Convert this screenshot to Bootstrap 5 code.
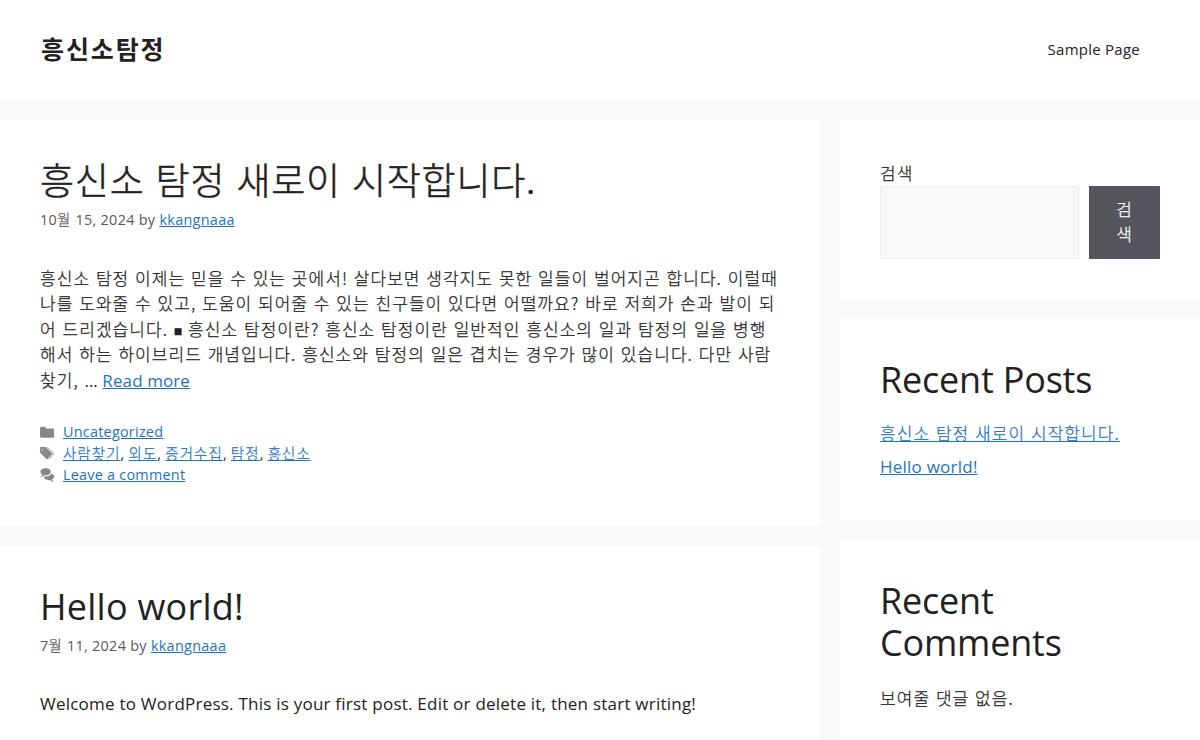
<!DOCTYPE html>
<html lang="ko">

<head>
  <meta charset="UTF-8" />
  <meta name="viewport" content="width=device-width, initial-scale=1.0" />
  <title>흥신소탐정</title>
  <link href="https://cdn.jsdelivr.net/npm/bootstrap@5.3.3/dist/css/bootstrap.min.css" rel="stylesheet" />
  <style>
    body {
      background-color: #f6f8fa;
      color: #222;
      font-family: "Open Sans", "Noto Sans CJK KR", sans-serif;
      font-size: 17px;
      line-height: 25.5px;
      letter-spacing: .23px;
      height: 740px;
      overflow: hidden;
    }
    a { color: #1e73be; }
    .ko {
      font-family: "Noto Sans CJK KR", sans-serif;
      font-weight: 300;
      letter-spacing: 1.05px;
      -webkit-text-stroke: .25px currentColor;
    }
    .latin {
      font-family: "Open Sans", sans-serif;
      font-weight: 400;
      letter-spacing: .1px;
      -webkit-text-stroke: 0;
    }
    .bullet { font-family: "DejaVu Sans", sans-serif; font-size: 14px; line-height: 1; letter-spacing: 0; }
    .site-header { height: 100px; padding: 0 60px 2px 41px; }
    .site-title {
      font-size: 25px;
      font-weight: 700;
      letter-spacing: 1.9px;
      color: #222;
      -webkit-text-stroke: 0;
    }
    .main-nav { font-size: 15px; color: #222; letter-spacing: .25px; }
    .page-grid { gap: 20px; margin-top: 20px; }
    .side-col { width: 360px; gap: 20px; }
    .posts-col { gap: 20px; min-width: 0; }
    .panel { background: #fff; padding: 40px; }
    .heading {
      font-size: 36px;
      line-height: 42px;
      font-weight: 400;
      letter-spacing: .25px;
      margin: 0;
    }
    .side-col .heading { letter-spacing: -.2px; }
    .heading.ko {
      font-size: 37px;
      font-weight: 300;
      line-height: 38px;
      letter-spacing: .78px;
      padding-bottom: 4px;
      -webkit-text-stroke: .5px currentColor;
    }
    .byline {
      font-size: 14.45px;
      line-height: 21.7px;
      height: 21.7px;
      letter-spacing: .28px;
      color: #595959;
      margin: 7px 0 34px;
    }
    .byline .ko { line-height: 1; }
    .excerpt { height: 127.5px; margin-bottom: 0; }
    .post-meta { font-size: 14.45px; line-height: 21.7px; margin-top: 28.9px; }
    .post-meta > div { height: 21.7px; }
    .post-meta .ko { letter-spacing: 1.12px; }
    .post-meta svg {
      width: 14.45px;
      height: 14.45px;
      fill: #87868d;
      margin-right: 8.5px;
    }
    .search-input {
      height: 73px;
      border: 1px solid #ebeced;
      background: #f7f8f9;
      border-radius: 0;
    }
    .search-btn {
      width: 71px;
      height: 73px;
      padding: 9px 24px 11px;
      border: 0;
      background: #55555e;
      color: #fff;
      word-break: break-all;
    }
    .recent-list { margin: 19px 0 0; }
    .recent-list li { height: 25.5px; margin-bottom: 9px; }
    .recent-list li:last-child { margin-bottom: 0; }
    .no-comments { margin-top: 21px; }
  </style>
</head>

<body>
  <header class="site-header bg-white d-flex align-items-center justify-content-between">
    <a href="#" class="site-title ko text-decoration-none">흥신소탐정</a>
    <nav><a href="#" class="main-nav text-decoration-none">Sample Page</a></nav>
  </header>

  <div class="page-grid d-flex align-items-start">
    <main class="posts-col flex-grow-1 d-flex flex-column">
      <article class="panel">
        <h2 class="heading ko">흥신소 탐정 새로이 시작합니다.</h2>
        <div class="byline">10<span class="ko">월</span> 15, 2024 by <a href="#">kkangnaaa</a></div>
        <p class="excerpt text-nowrap ko">
          흥신소 탐정 이제는 믿을 수 있는 곳에서! 살다보면 생각지도 못한 일들이 벌어지곤 합니다. 이럴때<br>
          나를 도와줄 수 있고, 도움이 되어줄 수 있는 친구들이 있다면 어떨까요? 바로 저희가 손과 발이 되<br>
          어 드리겠습니다. <span class="bullet">■</span> 흥신소 탐정이란? 흥신소 탐정이란 일반적인 흥신소의 일과 탐정의 일을 병행<br>
          해서 하는 하이브리드 개념입니다. 흥신소와 탐정의 일은 겹치는 경우가 많이 있습니다. 다만 사람<br>
          찾기, <span class="latin">… <a href="#">Read more</a></span>
        </p>
        <footer class="post-meta">
          <div class="d-flex align-items-center">
            <svg viewBox="0 0 512 512"><path d="M0 112c0-26.51 21.49-48 48-48h110.014a48 48 0 0143.592 27.907l12.349 26.791A16 16 0 00228.486 128H464c26.51 0 48 21.49 48 48v224c0 26.51-21.49 48-48 48H48c-26.51 0-48-21.49-48-48V112z"/></svg>
            <a href="#">Uncategorized</a>
          </div>
          <div class="d-flex align-items-center">
            <svg viewBox="0 0 512 512"><path d="M20 39.5c-8.836 0-16 7.163-16 16v176c0 4.243 1.686 8.313 4.687 11.314l224 224c6.248 6.248 16.378 6.248 22.626 0l176-176c6.244-6.244 6.25-16.364.013-22.615l-223.5-224A15.999 15.999 0 00196.5 39.5H20zm56 96c0-13.255 10.745-24 24-24s24 10.745 24 24-10.745 24-24 24-24-10.745-24-24z"/><path d="M259.515 43.015c4.686-4.687 12.284-4.687 16.97 0l228 228c4.686 4.686 4.686 12.284 0 16.97l-180 180c-4.686 4.687-12.284 4.687-16.97 0-4.686-4.686-4.686-12.284 0-16.97L479.029 279.5 259.515 59.985c-4.686-4.686-4.686-12.284 0-16.97z"/></svg>
            <span><a href="#" class="ko">사람찾기</a>, <a href="#" class="ko">외도</a>, <a href="#" class="ko">증거수집</a>, <a href="#" class="ko">탐정</a>, <a href="#" class="ko">흥신소</a></span>
          </div>
          <div class="d-flex align-items-center">
            <svg viewBox="0 0 512 512"><path d="M132.838 329.973a435.298 435.298 0 0016.769-9.004c13.363-7.574 26.587-16.142 37.419-25.507 7.544.597 15.27.925 23.098.925 54.905 0 105.634-15.311 143.285-41.28 23.728-16.365 43.115-37.692 54.155-62.645 54.739 22.205 91.498 63.272 91.498 110.286 0 42.186-29.558 79.498-75.09 102.828 23.46 49.216 75.09 101.709 75.09 101.709s-115.837-38.35-154.424-78.46c-9.956 1.12-20.297 1.758-30.793 1.758-88.727 0-162.927-43.071-181.007-100.61z"/><path d="M383.371 132.502c0 70.603-82.961 127.787-185.216 127.787-10.496 0-20.837-.639-30.793-1.757-38.587 40.093-154.424 78.429-154.424 78.429s51.63-52.472 75.09-101.67c-45.532-23.321-75.09-60.619-75.09-102.789C12.938 61.9 95.9 4.716 198.155 4.716 300.41 4.715 383.37 61.9 383.37 132.502z"/></svg>
            <a href="#">Leave a comment</a>
          </div>
        </footer>
      </article>

      <article class="panel">
        <h2 class="heading">Hello world!</h2>
        <div class="byline">7<span class="ko">월</span> 11, 2024 by <a href="#">kkangnaaa</a></div>
        <p class="mb-0">Welcome to WordPress. This is your first post. Edit or delete it, then start writing!</p>
      </article>
    </main>

    <aside class="side-col flex-shrink-0 d-flex flex-column">
      <section class="panel">
        <label for="search" class="ko d-block">검색</label>
        <div class="d-flex" style="gap: 10px;">
          <input type="search" id="search" class="form-control search-input" />
          <button type="button" class="search-btn ko flex-shrink-0">검색</button>
        </div>
      </section>

      <section class="panel">
        <h2 class="heading">Recent Posts</h2>
        <ul class="recent-list list-unstyled">
          <li><a href="#" class="ko">흥신소 탐정 새로이 시작합니다.</a></li>
          <li><a href="#">Hello world!</a></li>
        </ul>
      </section>

      <section class="panel">
        <h2 class="heading">Recent Comments</h2>
        <div class="no-comments ko">보여줄 댓글 없음.</div>
      </section>
    </aside>
  </div>

  <script src="https://cdn.jsdelivr.net/npm/bootstrap@5.3.3/dist/js/bootstrap.bundle.min.js"></script>
</body>

</html>
